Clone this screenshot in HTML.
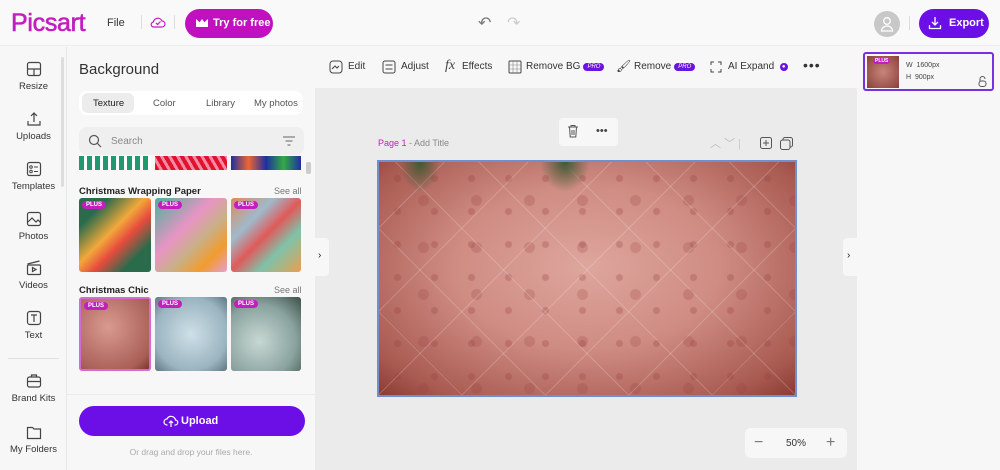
<!DOCTYPE html>
<html><head><meta charset="utf-8"><style>
*{box-sizing:border-box;margin:0;padding:0}
body{width:1000px;height:470px;overflow:hidden;font-family:"Liberation Sans",sans-serif;background:#f7f7f7;position:relative;color:#222}
.a{position:absolute}
.top{left:0;top:0;width:1000px;height:46px;background:#f9f9f9;border-bottom:1px solid #eee}
.rail{left:0;top:47px;width:67px;height:423px;background:#f7f7f7;border-right:1px solid #e8e8e8}
.ri{position:absolute;left:0;width:67px;text-align:center;font-size:9.5px;color:#333}
.ri svg{display:block;margin:0 auto 4px}
.panel{left:67px;top:47px;width:248px;height:423px;background:#f7f7f7}
.canvas{left:315px;top:46px;width:542px;height:424px;background:#ebebeb}
.tb{left:315px;top:46px;width:542px;height:42px;background:#f7f7f7;font-size:10px;color:#333}
.tb span{position:absolute;top:15px}
.pro{display:inline-block;background:#6a14e0;color:#fff;font-size:6px;border-radius:6px;padding:1px 4px;margin-left:3px;vertical-align:1px}
.th{position:absolute;width:72px;height:74px;border-radius:3px}
.plus{position:absolute;left:3px;top:3px;background:#c21fbf;color:#fff;font-size:6px;font-weight:bold;border-radius:5px;padding:1px 4px}
.sec{position:absolute;left:79px;font-size:9.5px;font-weight:bold;color:#222}
.see{position:absolute;right:14px;font-size:9px;color:#777}
</style></head><body>
<div class="a top">
 <div class="a" style="left:11px;top:9px;font-size:25px;color:#c21fbf;letter-spacing:-0.3px;-webkit-text-stroke:0.6px #c21fbf">Picsart</div>
 <div class="a" style="left:107px;top:17px;font-size:11px;color:#333">File</div>
 <div class="a" style="left:141px;top:15px;width:1px;height:14px;background:#ddd"></div>
 <svg class="a" style="left:150px;top:16px" width="16" height="12" viewBox="0 0 16 12"><path d="M4 11h8a3 3 0 0 0 0-6 4.5 4.5 0 0 0-8.6 1A2.5 2.5 0 0 0 4 11z" fill="none" stroke="#c21fbf" stroke-width="1.2"/><path d="M6 7l1.6 1.5L10.5 5.5" fill="none" stroke="#c21fbf" stroke-width="1.2"/></svg>
 <div class="a" style="left:174px;top:15px;width:1px;height:14px;background:#ddd"></div>
 <div class="a" style="left:185px;top:9px;width:88px;height:29px;border-radius:15px;background:#c010bf;color:#fff;font-size:11px;font-weight:bold;padding:8px 0 0 28px">Try for free</div>
 <div class="a" style="left:196px;top:19px;width:12px;height:8px;background:#fff;clip-path:polygon(0 0,30% 40%,50% 0,70% 40%,100% 0,100% 100%,0 100%)"></div>
 <div class="a" style="left:478px;top:13px;font-size:16px;color:#777">↶</div>
 <div class="a" style="left:507px;top:13px;font-size:16px;color:#ccc">↷</div>
 <div class="a" style="left:874px;top:11px;width:26px;height:26px;border-radius:50%;background:#c8c8c8"></div>
 <svg class="a" style="left:880px;top:16px" width="14" height="16" viewBox="0 0 14 16"><circle cx="7" cy="5" r="3.3" fill="none" stroke="#fff" stroke-width="1.3"/><path d="M1.5 15a5.5 5 0 0 1 11 0z" fill="none" stroke="#fff" stroke-width="1.3"/></svg>
 <div class="a" style="left:909px;top:16px;width:1px;height:14px;background:#ddd"></div>
 <div class="a" style="left:919px;top:9px;width:70px;height:29px;border-radius:15px;background:#6c0ee6;color:#fff;font-size:11px;font-weight:bold;padding:8px 0 0 30px">Export</div>
 <svg class="a" style="left:928px;top:16px" width="14" height="14" viewBox="0 0 14 14"><path d="M7 1v8M4 6l3 3 3-3M1.5 9v3.5h11V9" fill="none" stroke="#fff" stroke-width="1.3"/></svg>
</div>

<div class="a rail">
 <div class="a" style="left:61px;top:10px;width:3px;height:130px;background:#ddd;border-radius:2px"></div>
 <div class="ri" style="top:14px"><svg width="16" height="16" viewBox="0 0 16 16"><rect x="1.5" y="1.5" width="13" height="13" rx="2" fill="none" stroke="#444" stroke-width="1.2"/><path d="M1.5 8h13M8 8v6.5" stroke="#444" stroke-width="1.2"/></svg>Resize</div>
 <div class="ri" style="top:64px"><svg width="16" height="16" viewBox="0 0 16 16"><path d="M8 2v9M5 5l3-3 3 3M2 10v4h12v-4" fill="none" stroke="#444" stroke-width="1.2"/></svg>Uploads</div>
 <div class="ri" style="top:114px"><svg width="16" height="16" viewBox="0 0 16 16"><rect x="1.5" y="1.5" width="13" height="13" rx="2" fill="none" stroke="#444" stroke-width="1.2"/><circle cx="5" cy="6" r="1.3" fill="none" stroke="#444"/><circle cx="5" cy="10.5" r="1.3" fill="none" stroke="#444"/><path d="M8 6h4M8 10.5h4" stroke="#444"/></svg>Templates</div>
 <div class="ri" style="top:164px"><svg width="16" height="16" viewBox="0 0 16 16"><rect x="1.5" y="1.5" width="13" height="13" rx="2" fill="none" stroke="#444" stroke-width="1.2"/><path d="M2 11l4-4 4 4 2-2 2.5 2.5" fill="none" stroke="#444" stroke-width="1.2"/></svg>Photos</div>
 <div class="ri" style="top:213px"><svg width="16" height="16" viewBox="0 0 16 16"><rect x="1.5" y="5" width="13" height="9.5" rx="1" fill="none" stroke="#444" stroke-width="1.2"/><path d="M1.5 4l12-3M6.5 7.5v4l3.5-2z" fill="none" stroke="#444" stroke-width="1.2"/></svg>Videos</div>
 <div class="ri" style="top:263px"><svg width="16" height="16" viewBox="0 0 16 16"><rect x="1.5" y="1.5" width="13" height="13" rx="2.5" fill="none" stroke="#444" stroke-width="1.2"/><path d="M5 5h6M8 5v7" stroke="#444" stroke-width="1.2"/></svg>Text</div>
 <div class="a" style="left:8px;top:311px;width:51px;height:1px;background:#e0e0e0"></div>
 <div class="ri" style="top:326px"><svg width="16" height="16" viewBox="0 0 16 16"><rect x="1.5" y="4" width="13" height="10" rx="2" fill="none" stroke="#444" stroke-width="1.2"/><path d="M5.5 4V2h5v2M1.5 8.5h13" fill="none" stroke="#444" stroke-width="1.2"/></svg>Brand Kits</div>
 <div class="ri" style="top:377px"><svg width="16" height="16" viewBox="0 0 16 16"><path d="M1.5 3.5h5l1.5 1.5h6.5v9.5h-13z" fill="none" stroke="#444" stroke-width="1.2"/></svg>My Folders</div>
</div>

<div class="a panel">
 <div class="a" style="left:12px;top:14px;font-size:15px;color:#333">Background</div>
 <div class="a" style="left:12px;top:44px;width:224px;height:24px;background:#fff;border-radius:8px"></div>
 <div class="a" style="left:15px;top:46px;width:52px;height:20px;background:#ececec;border-radius:6px"></div>
 <div class="a" style="left:26px;top:51px;font-size:9.5px;color:#222">Texture</div>
 <div class="a" style="left:86px;top:51px;font-size:9.5px;color:#555">Color</div>
 <div class="a" style="left:139px;top:51px;font-size:9.5px;color:#555">Library</div>
 <div class="a" style="left:187px;top:51px;font-size:9.5px;color:#555">My photos</div>
 <div class="a" style="left:12px;top:80px;width:225px;height:28px;background:#efefef;border-radius:8px"></div>
 <svg class="a" style="left:21px;top:87px" width="14" height="14" viewBox="0 0 14 14"><circle cx="6" cy="6" r="4.5" fill="none" stroke="#555" stroke-width="1.2"/><path d="M9.5 9.5l3.5 3.5" stroke="#555" stroke-width="1.2"/></svg>
 <div class="a" style="left:44px;top:89px;font-size:10px;color:#888">Search</div>
 <svg class="a" style="left:216px;top:89px" width="12" height="10" viewBox="0 0 12 10"><path d="M0 1h12M2.5 5h7M4.5 9h3" stroke="#666" stroke-width="1.1"/></svg>
 <div class="a" style="left:239px;top:115px;width:5px;height:12px;background:#ccc;border-radius:2px"></div>
 <div class="a" style="left:12px;top:109px;width:72px;height:14px;background:repeating-linear-gradient(90deg,#1f9a6f 0 5px,#fff 5px 8px)"></div>
 <div class="a" style="left:88px;top:109px;width:72px;height:14px;background:repeating-linear-gradient(60deg,#e3112a 0 4px,#f58aa8 4px 7px)"></div>
 <div class="a" style="left:164px;top:109px;width:70px;height:14px;background:linear-gradient(90deg,#1d2fa0,#e63,#1d2fa0,#3a4,#1d2fa0)"></div>
</div>
<div class="sec" style="top:186px">Christmas Wrapping Paper</div><div class="see" style="top:186px;left:274px">See all</div>
<div class="th" style="left:79px;top:198px;background:linear-gradient(135deg,#2a6b4c 20%,#f2a83b 45%,#e64b3c 60%,#2a6b4c 80%)"><span class="plus">PLUS</span></div>
<div class="th" style="left:155px;top:198px;background:linear-gradient(135deg,#48b29a,#e994c4 40%,#c8b088 60%,#f29b2f 80%,#e4a0d0)"><span class="plus">PLUS</span></div>
<div class="th" style="left:231px;top:198px;width:70px;background:linear-gradient(135deg,#e08a5c,#9fb9c9 30%,#e05a5a 50%,#7fc2a9 70%,#e8a050)"><span class="plus">PLUS</span></div>
<div class="sec" style="top:285px">Christmas Chic</div><div class="see" style="top:285px;left:274px">See all</div>
<div class="th" style="left:79px;top:297px;border:2px solid #d46ad4;background:radial-gradient(circle at 40% 40%,#d99a90,#a85e55 80%,#7a3530)"><span class="plus">PLUS</span></div>
<div class="th" style="left:155px;top:297px;background:radial-gradient(circle at 50% 50%,#cfe0e8,#9ab4c0 70%,#5f7680)"><span class="plus">PLUS</span></div>
<div class="th" style="left:231px;top:297px;width:70px;background:radial-gradient(circle at 40% 60%,#c8d8d4,#8aa39f 60%,#3d4f48)"><span class="plus">PLUS</span></div>
<div class="a" style="left:67px;top:394px;width:248px;height:76px;background:#f7f7f7;border-top:1px solid #eaeaea"></div>
<div class="a" style="left:79px;top:406px;width:226px;height:30px;border-radius:15px;background:#6c0ee6;color:#fff;font-size:11px;font-weight:bold;text-align:center;padding-top:9px">&nbsp;&nbsp;&nbsp;&nbsp;&nbsp;Upload</div>
<svg class="a" style="left:163px;top:414px" width="16" height="14" viewBox="0 0 16 14"><path d="M4.5 11H4a3 3 0 0 1 0-6 4.5 4.5 0 0 1 8.5 1 2.5 2.5 0 0 1-.5 5h-.5M8 13V7M6 9l2-2 2 2" fill="none" stroke="#fff" stroke-width="1.2"/></svg>
<div class="a" style="left:67px;top:447px;width:248px;text-align:center;font-size:8.5px;color:#aaa">Or drag and drop your files here.</div>

<div class="a canvas"></div>
<div class="a tb">
 <svg class="a" style="left:14px;top:14px" width="14" height="14" viewBox="0 0 14 14"><rect x="1" y="1" width="12" height="12" rx="3" fill="none" stroke="#444"/><path d="M3 9l3-3 2 2 2-2" fill="none" stroke="#444"/></svg><span style="left:33px">Edit</span>
 <svg class="a" style="left:67px;top:14px" width="14" height="14" viewBox="0 0 14 14"><rect x="1" y="1" width="12" height="12" rx="2" fill="none" stroke="#444"/><path d="M3.5 5h7M3.5 9h7" stroke="#444"/></svg><span style="left:86px">Adjust</span>
 <span style="left:130px;top:12px;font-style:italic;font-family:'Liberation Serif',serif;font-size:14px;color:#444">fx</span><span style="left:147px">Effects</span>
 <svg class="a" style="left:193px;top:14px" width="14" height="14" viewBox="0 0 14 14"><rect x="1" y="1" width="12" height="12" rx="1" fill="none" stroke="#444"/><path d="M1 5h12M1 9h12M5 1v12M9 1v12" stroke="#888" stroke-width=".6"/></svg><span style="left:211px">Remove BG<i class="pro">PRO</i></span>
 <span style="left:301px;top:13px;font-size:12px">🖌</span><span style="left:319px">Remove<i class="pro">PRO</i></span>
 <svg class="a" style="left:395px;top:15px" width="12" height="12" viewBox="0 0 12 12"><path d="M1 4V1h3M8 1h3v3M11 8v3H8M4 11H1V8" fill="none" stroke="#444"/></svg><span style="left:413px">AI Expand <i class="pro" style="border-radius:50%;padding:1px 2px">●</i></span>
 <span style="left:488px;top:11px;font-size:14px;letter-spacing:1px">•••</span>
</div>
<div class="a" style="left:559px;top:118px;width:59px;height:28px;background:#f7f7f7;border-radius:4px"></div>
<svg class="a" style="left:567px;top:124px" width="12" height="14" viewBox="0 0 12 14"><path d="M1 3h10M4 3V1.5h4V3M2.5 3l.7 10h5.6l.7-10M5 6v5M7 6v5" fill="none" stroke="#555"/></svg>
<div class="a" style="left:596px;top:125px;font-size:11px;color:#444">•••</div>
<div class="a" style="left:378px;top:138px;font-size:9px;color:#888"><span style="color:#c21fbf">Page 1</span> - Add Title</div>
<div class="a" style="left:710px;top:135px;font-size:11px;color:#bbb">︿ ﹀ <span style="color:#ccc">|</span></div>
<svg class="a" style="left:760px;top:137px" width="12" height="12" viewBox="0 0 12 12"><rect x=".5" y=".5" width="11" height="11" rx="2" fill="none" stroke="#555"/><path d="M6 3v6M3 6h6" stroke="#555"/></svg>
<svg class="a" style="left:780px;top:137px" width="13" height="13" viewBox="0 0 13 13"><rect x="3" y=".5" width="9.5" height="9.5" rx="2" fill="none" stroke="#555"/><rect x=".5" y="3" width="9.5" height="9.5" rx="2" fill="#ebebeb" stroke="#555"/></svg>
<div class="a" style="left:377px;top:160px;width:420px;height:237px;border:2px solid #6f8fd0;background:radial-gradient(ellipse at 50% 45%,#dea69d 0%,#cf8c83 45%,#a85a50 85%,#8a3c34 100%)"></div>
<div class="a" style="left:379px;top:162px;width:416px;height:233px;background:repeating-linear-gradient(45deg,transparent 0 58px,rgba(255,255,255,.18) 58px 59px),repeating-linear-gradient(-45deg,transparent 0 58px,rgba(255,255,255,.18) 58px 59px),radial-gradient(circle,rgba(150,60,60,.28) 0 3px,transparent 4px) 0 0/37px 33px,radial-gradient(circle,rgba(150,60,60,.22) 0 5px,transparent 6px) 18px 15px/53px 47px"></div>
<div class="a" style="left:400px;top:162px;width:40px;height:30px;background:radial-gradient(ellipse at 50% 0,#3e5a32,transparent 70%)"></div>
<div class="a" style="left:540px;top:162px;width:50px;height:30px;background:radial-gradient(ellipse at 50% 0,#3e5a32,transparent 70%)"></div>
<div class="a" style="left:315px;top:238px;width:14px;height:38px;background:#f7f7f7;border-radius:0 4px 4px 0;font-size:10px;padding:12px 0 0 3px">›</div>
<div class="a" style="left:843px;top:238px;width:14px;height:38px;background:#f7f7f7;border-radius:4px 0 0 4px;font-size:10px;padding:12px 0 0 4px">›</div>
<div class="a" style="left:745px;top:428px;width:102px;height:30px;background:#f7f7f7;border-radius:6px"></div>
<div class="a" style="left:754px;top:434px;font-size:16px;color:#777">−</div>
<div class="a" style="left:786px;top:438px;font-size:10px;color:#333">50%</div>
<div class="a" style="left:826px;top:434px;font-size:16px;color:#777">+</div>

<div class="a" style="left:857px;top:46px;width:143px;height:424px;background:#f7f7f7"></div>
<div class="a" style="left:863px;top:52px;width:131px;height:39px;border:2px solid #7a2fe0;border-radius:3px;background:#f7f7f7"></div>
<div class="a" style="left:867px;top:56px;width:32px;height:32px;background:radial-gradient(circle,#c8857c,#8a4038)"><span class="plus" style="left:6px;top:2px;font-size:5px;padding:0 2px">PLUS</span></div>
<div class="a" style="left:906px;top:62px;font-size:7px;color:#444">W&nbsp; 1600px</div>
<div class="a" style="left:906px;top:74px;font-size:7px;color:#444">H&nbsp; 900px</div>
<svg class="a" style="left:978px;top:76px" width="9" height="11" viewBox="0 0 9 11"><path d="M2 5V3a2.5 2.5 0 0 1 5 0" fill="none" stroke="#555"/><rect x="1" y="5" width="7" height="5.5" rx="2.5" fill="none" stroke="#555"/></svg>
</body></html>
